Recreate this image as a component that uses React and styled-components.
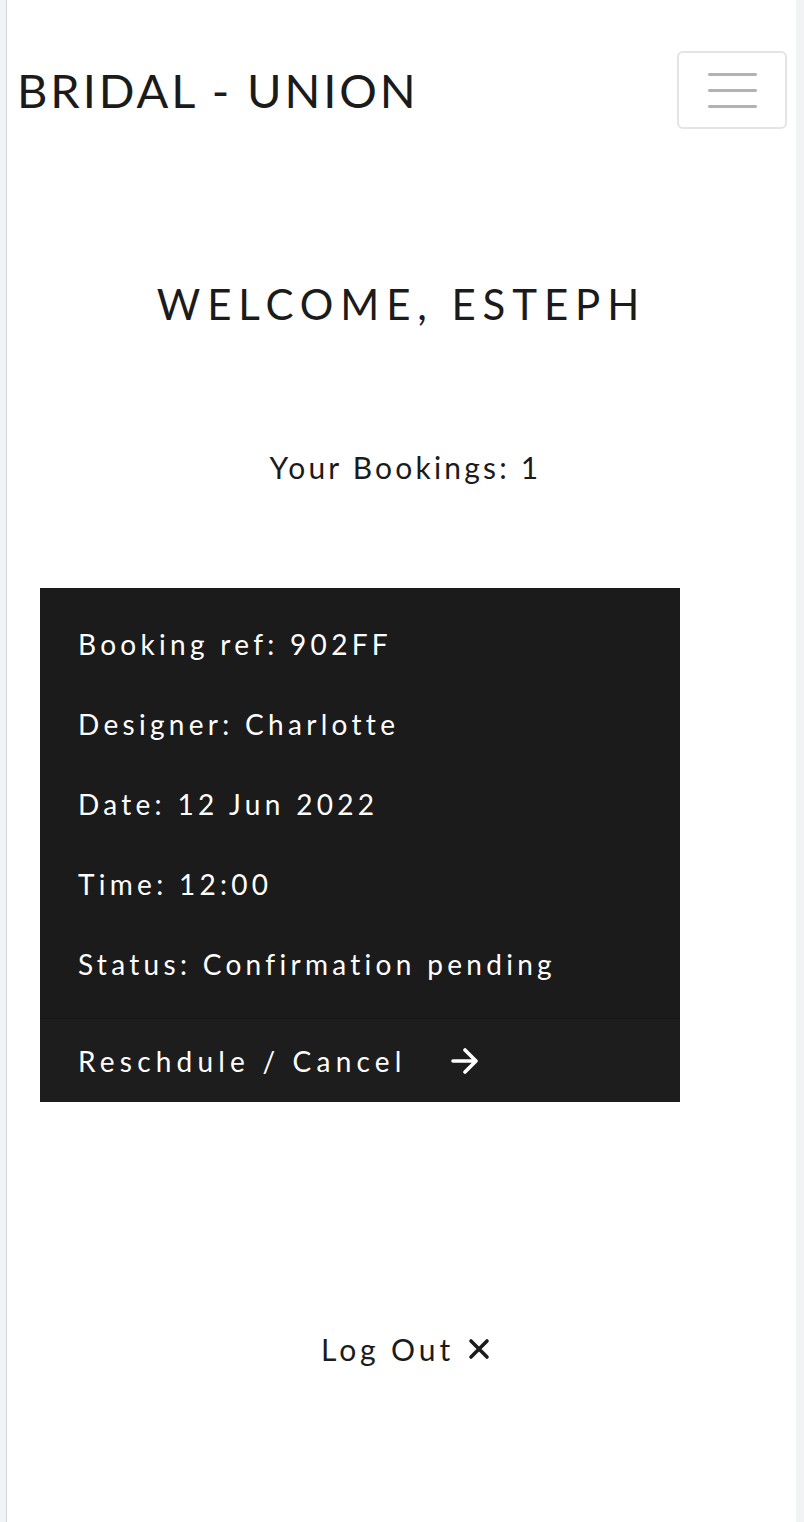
import styled, { createGlobalStyle } from "styled-components";

const Global = createGlobalStyle`
  body {
    margin: 0;
    background: #f2f3f5;
    font-family: "Lato", "Open Sans", sans-serif;
    color: #1b1b1b;
  }
`;

const Page = styled.div`
  margin-left: 6px;
  width: 789px;
  min-height: 1522px;
  background: #ffffff;
  border-left: 1px solid #d6d6d6;
`;

const Nav = styled.header`
  display: flex;
  align-items: center;
  justify-content: space-between;
  padding: 51px 9px 0 10px;
`;

const Brand = styled.a`
  font-size: 47px;
  letter-spacing: 2.9px;
  color: #1b1b1b;
  text-decoration: none;
`;

const Toggler = styled.button`
  width: 110px;
  height: 78px;
  background: #fff;
  border: 2px solid #e4e4e4;
  border-radius: 6px;
  display: flex;
  flex-direction: column;
  align-items: center;
  justify-content: center;
  gap: 13px;
  padding: 0;
`;

const Bar = styled.span`
  display: block;
  width: 49px;
  height: 3px;
  border-radius: 2px;
  background: #b2b2b2;
`;

const Welcome = styled.h1`
  margin: 150px 0 0;
  text-align: center;
  font-weight: 400;
  font-size: 42px;
  letter-spacing: 6.9px;
`;

const Count = styled.p`
  margin: 120px 0 0;
  padding-left: 8px;
  text-align: center;
  font-size: 30px;
  letter-spacing: 3.2px;
`;

const Card = styled.section`
  margin: 103px 0 0 33px;
  width: 640px;
  background: #1b1b1b;
  color: #fff;
`;

const Body = styled.div`
  padding: 16px 38px 14px;
`;

const Line = styled.p`
  margin: 0;
  height: 80px;
  line-height: 80px;
  font-size: 28px;
  letter-spacing: 4.3px;
`;

const Footer = styled.div`
  border-top: 1px solid #161616;
  background: #1d1d1d;
  height: 83px;
  display: flex;
  align-items: center;
  gap: 44px;
  padding: 0 38px;
  font-size: 28px;
  letter-spacing: 5.2px;
`;

const LogOut = styled.div`
  margin-top: 229px;
  padding-left: 8px;
  display: flex;
  align-items: center;
  justify-content: center;
  gap: 14px;
  font-size: 30px;
  letter-spacing: 3.9px;
`;

const Arrow = () => (
  <svg width="28" height="26" viewBox="0 0 28 26" fill="none" stroke="currentColor" strokeWidth="3.6" strokeLinecap="round" strokeLinejoin="round">
    <path d="M2 13h23M14 2l11 11-11 11" />
  </svg>
);

const Cross = () => (
  <svg width="22" height="22" viewBox="0 0 22 22" fill="none" stroke="currentColor" strokeWidth="3.6" strokeLinecap="round">
    <path d="M3 3l16 16M19 3L3 19" />
  </svg>
);

export default function App() {
  const rows = [
    "Booking ref: 902FF",
    "Designer: Charlotte",
    "Date: 12 Jun 2022",
    "Time: 12:00",
    "Status: Confirmation pending",
  ];
  return (
    <>
      <Global />
      <Page>
        <Nav>
          <Brand>BRIDAL - UNION</Brand>
          <Toggler>
            <Bar />
            <Bar />
            <Bar />
          </Toggler>
        </Nav>
        <Welcome>WELCOME, ESTEPH</Welcome>
        <Count>Your Bookings: 1</Count>
        <Card>
          <Body>
            {rows.map((r) => (
              <Line key={r}>{r}</Line>
            ))}
          </Body>
          <Footer>
            <span>Reschdule / Cancel</span>
            <Arrow />
          </Footer>
        </Card>
        <LogOut>
          <span>Log Out</span>
          <Cross />
        </LogOut>
      </Page>
    </>
  );
}
